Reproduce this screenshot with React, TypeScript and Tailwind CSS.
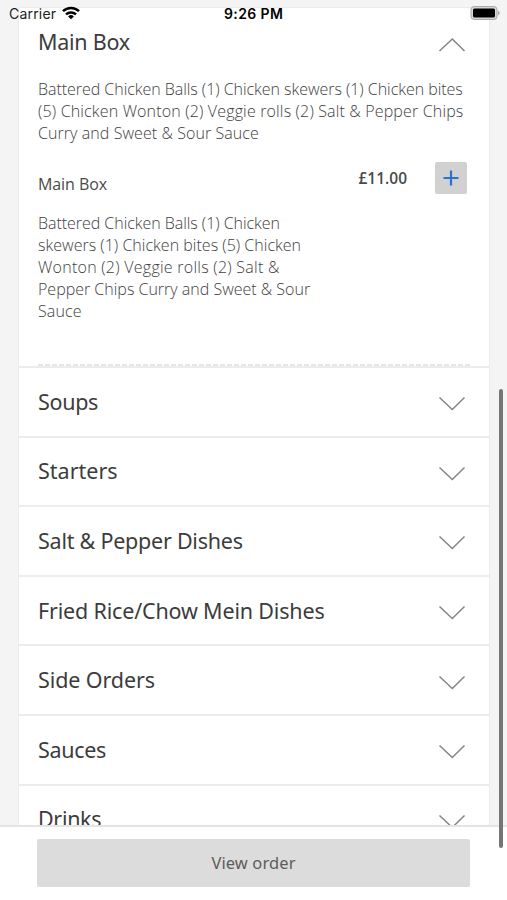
const heading = "font-['Noto_Sans',sans-serif] text-[21.5px] leading-[30px] text-[#3c3c3c] whitespace-nowrap";
const body = "font-['Open_Sans',sans-serif] font-light text-[16px] leading-[22px] text-[#3e3e3e]";

function Chevron({ up = false }: { up?: boolean }) {
  return (
    <svg width="28" height="16" viewBox="0 0 28 16" fill="none" stroke="#858585" strokeWidth="1.5" className="shrink-0">
      <path d={up ? 'M1.5 14L14.3 2L26.5 14' : 'M1.5 1.5L14.3 13.5L26.5 1.5'} />
    </svg>
  );
}

function Line({ text, spacing }: { text: string; spacing: string }) {
  return (
    <div className="whitespace-nowrap">
      <span className={spacing}>{text}</span>
    </div>
  );
}

const rows = [
  { name: 'Soups', spacing: 'tracking-[-0.3px]' },
  { name: 'Starters', spacing: 'tracking-[0px]' },
  { name: 'Salt & Pepper Dishes', spacing: 'tracking-[-0.24px]' },
  { name: 'Fried Rice/Chow Mein Dishes', spacing: 'tracking-[-0.17px]' },
  { name: 'Side Orders', spacing: 'tracking-[-0.1px]' },
  { name: 'Sauces', spacing: 'tracking-[-0.33px]' },
  { name: 'Drinks', spacing: 'tracking-[-0.33px]' },
];

const summary = [
  { text: 'Battered Chicken Balls (1) Chicken skewers (1) Chicken bites', spacing: 'tracking-[-0.04px]' },
  { text: '(5) Chicken Wonton (2) Veggie rolls (2) Salt & Pepper Chips', spacing: 'tracking-[0.16px]' },
  { text: 'Curry and Sweet & Sour Sauce', spacing: 'tracking-[0.07px]' },
];

const details = [
  { text: 'Battered Chicken Balls (1) Chicken', spacing: 'tracking-[-0.04px]' },
  { text: 'skewers (1) Chicken bites (5) Chicken', spacing: 'tracking-[0.02px]' },
  { text: 'Wonton (2) Veggie rolls (2) Salt &', spacing: 'tracking-[0.26px]' },
  { text: 'Pepper Chips Curry and Sweet & Sour', spacing: 'tracking-[0px]' },
  { text: 'Sauce', spacing: 'tracking-[0.1px]' },
];

export default function App() {
  return (
    <div className="relative flex h-[900px] w-[507px] flex-col overflow-hidden bg-[#f4f4f4]">
      <main className="h-[825px] shrink-0 overflow-hidden pt-[7px] pl-[18px]">
        <div className="w-[472px] border border-[#ececec] bg-white">
          <section className="flex h-[358px] flex-col pl-[19px]">
            <div className="flex items-center justify-between pt-[19px] pr-[23px]">
              <h2 className={`${heading} tracking-[-0.25px]`}>Main Box</h2>
              <div className="pt-[5px]"><Chevron up /></div>
            </div>
            <div className={`mt-[21px] ${body}`}>
              {summary.map((l) => <Line key={l.text} {...l} />)}
            </div>
            <div className="mt-[18px] flex h-[32px] items-center pr-[22px]">
              <h3 className="flex-1 pt-[12px] font-['Open_Sans',sans-serif] text-[16px] font-medium leading-[22px] tracking-[-0.08px] text-[#4a4a4a]">Main Box</h3>
              <span className="mr-[28px] pt-[2px] font-['Open_Sans',sans-serif] text-[15.5px] font-semibold tracking-[0px] text-[#4a4a4a]">£11.00</span>
              <button className="flex size-[32px] items-center justify-center rounded-[2px] bg-[#d1d1d1]">
                <svg width="16" height="16" viewBox="0 0 16 16" stroke="#2a72d0" strokeWidth="2.2"><path d="M8 0.5V15.5M0.5 8H15.5" /></svg>
              </button>
            </div>
            <div className={`mt-[18px] ${body}`}>
              {details.map((l) => <Line key={l.text} {...l} />)}
            </div>
            <div className="mt-auto mr-[19px] h-[2px] bg-[repeating-linear-gradient(90deg,#e6e6e6_0px,#e6e6e6_5px,#ffffff_5px,#ffffff_7px)]" />
          </section>
          {rows.map((r) => (
            <section key={r.name} className="flex h-[69.6px] items-center justify-between border-t-2 border-[#ececec] pr-[23px] pl-[19px]">
              <h2 className={`${heading} ${r.spacing}`}>{r.name}</h2>
              <div className="pt-[5px]"><Chevron /></div>
            </section>
          ))}
        </div>
      </main>
      <footer className="flex flex-1 flex-col border-t-2 border-[#e4e4e4] bg-white pt-[12px] pl-[37px]">
        <button className="h-[48px] w-[433px] rounded-[2px] bg-[#dcdcdc] font-['Noto_Sans',sans-serif] text-[16.5px] tracking-[0.1px] text-[#5c5c5c]">
          View order
        </button>
      </footer>
      <div className="absolute top-[389px] left-[499px] h-[459px] w-[4px] rounded-full bg-[#757575]" />
      <header className="absolute inset-x-0 top-0 flex h-[27px] items-center pl-[9px] font-['Inter',sans-serif] text-[14px] text-[#222]">
        <span className="w-[53px] tracking-[0.2px]">Carrier</span>
        <svg width="18" height="14" viewBox="0 0 18 14" fill="none" stroke="#000" strokeWidth="2.5" className="-mt-[2px]">
          <path d="M1 5.2A11.5 11.5 0 0 1 17 5.2" />
          <path d="M4 8.4A7.2 7.2 0 0 1 14 8.4" />
          <path d="M9 13.2L6.1 10.4A4.2 4.2 0 0 1 11.9 10.4Z" fill="#000" stroke="none" />
        </svg>
        <span className="ml-[144px] font-semibold tracking-[0.4px] text-black">9:26 PM</span>
        <svg width="31" height="14" viewBox="0 0 31 14" className="absolute top-[6px] left-[470px]">
          <rect x="1" y="0.6" width="26" height="12.8" rx="3" fill="#d8d8d8" stroke="#a5a5a5" />
          <rect x="3" y="2.5" width="22" height="9" rx="1.5" fill="#000" />
          <path d="M28.2 4.5Q31 7 28.2 9.5Z" fill="#999" />
        </svg>
      </header>
    </div>
  );
}
